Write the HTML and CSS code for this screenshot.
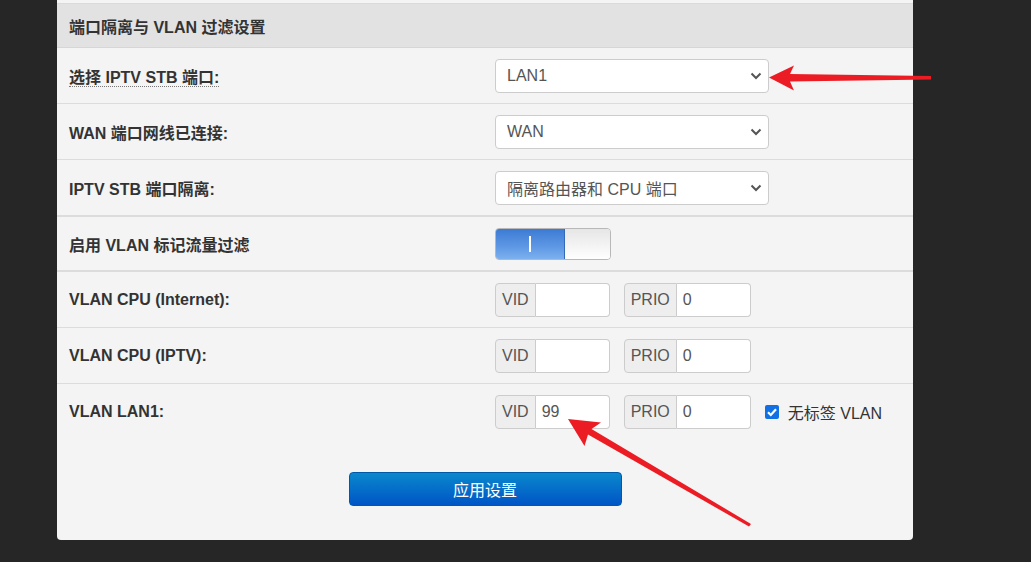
FILE: index.html
```html
<!DOCTYPE html>
<html lang="zh-CN">
<head>
<meta charset="utf-8">
<title>端口隔离与 VLAN 过滤设置</title>
<link rel="stylesheet" href="styles.css">
</head>
<body>
<div class="page">
  <div class="panel">
    <div class="top-strip"></div>
    <div class="panel-head">端口隔离与 VLAN 过滤设置</div>

    <div class="row">
      <div class="lbl"><span class="dotted">选择 IPTV STB 端口:</span></div>
      <div class="ctl">
        <div class="select"><span>LAN1</span><svg class="chev" width="12" height="8" viewBox="0 0 12 8"><path d="M1.5 1.5 L6 6 L10.5 1.5" fill="none" stroke="#555" stroke-width="2"/></svg></div>
      </div>
    </div>

    <div class="row">
      <div class="lbl">WAN 端口网线已连接:</div>
      <div class="ctl">
        <div class="select"><span>WAN</span><svg class="chev" width="12" height="8" viewBox="0 0 12 8"><path d="M1.5 1.5 L6 6 L10.5 1.5" fill="none" stroke="#555" stroke-width="2"/></svg></div>
      </div>
    </div>

    <div class="row row-thick">
      <div class="lbl">IPTV STB 端口隔离:</div>
      <div class="ctl">
        <div class="select"><span>隔离路由器和 CPU 端口</span><svg class="chev" width="12" height="8" viewBox="0 0 12 8"><path d="M1.5 1.5 L6 6 L10.5 1.5" fill="none" stroke="#555" stroke-width="2"/></svg></div>
      </div>
    </div>

    <div class="row row-toggle row-thick">
      <div class="lbl">启用 VLAN 标记流量过滤</div>
      <div class="ctl">
        <div class="toggle"><div class="toggle-on"><span class="bar"></span></div><div class="toggle-off"></div></div>
      </div>
    </div>

    <div class="row">
      <div class="lbl">VLAN CPU (Internet):</div>
      <div class="ctl">
        <div class="igroup"><span class="addon">VID</span><span class="field"></span></div>
        <div class="igroup"><span class="addon">PRIO</span><span class="field">0</span></div>
      </div>
    </div>

    <div class="row">
      <div class="lbl">VLAN CPU (IPTV):</div>
      <div class="ctl">
        <div class="igroup"><span class="addon">VID</span><span class="field"></span></div>
        <div class="igroup"><span class="addon">PRIO</span><span class="field">0</span></div>
      </div>
    </div>

    <div class="row row-last">
      <div class="lbl">VLAN LAN1:</div>
      <div class="ctl">
        <div class="igroup"><span class="addon">VID</span><span class="field">99</span></div>
        <div class="igroup"><span class="addon">PRIO</span><span class="field">0</span></div>
        <label class="check"><span class="box"><svg width="14" height="14" viewBox="0 0 14 14"><path d="M3 7.2 L5.8 10 L11 4.2" fill="none" stroke="#fff" stroke-width="2.2"/></svg></span>无标签 VLAN</label>
      </div>
    </div>

    <div class="actions">
      <button class="btn" type="button">应用设置</button>
    </div>
  </div>

  <svg class="annot" width="1031" height="562" viewBox="0 0 1031 562">
    <polygon points="769,77.5 794,65.5 790,74 931,76 931,79.5 790,81.5 794,90.5" fill="#ec1c24"/>
    <polygon points="568,419 601,422.5 591.5,429 751,524 749,526.5 588,434.5 584.5,446" fill="#ec1c24"/>
  </svg>
</div>
</body>
</html>
```

FILE: styles.css
```css
html, body {
  margin: 0;
  padding: 0;
}
body {
  background: #262626;
  font-family: "Liberation Sans", Arial, "Noto Sans CJK SC", sans-serif;
  color: #333;
}
.page {
  position: relative;
  width: 1031px;
  height: 562px;
  overflow: hidden;
}
.panel {
  margin-left: 57px;
  width: 856px;
  background: #f4f4f4;
  border-radius: 0 0 4px 4px;
}
.top-strip {
  height: 4px;
  background: #f4f4f4;
  border-bottom: 1px solid #dadada;
  box-sizing: border-box;
}
.panel-head {
  height: 44px;
  box-sizing: border-box;
  padding-left: 12px;
  display: flex;
  align-items: center;
  background: #e2e2e2;
  border-bottom: 1px solid #d6d6d6;
  font-size: 16px;
  font-weight: bold;
  color: #333;
}
.row {
  display: grid;
  grid-template-columns: 438px 1fr;
  align-items: center;
  height: 56px;
  box-sizing: border-box;
  border-bottom: 1px solid #dcdcdc;
}
.row-thick {
  height: 57px;
  border-bottom: 2px solid #dcdcdc;
}
.row-toggle {
  height: 55px;
}
.row-last {
  height: 55px;
  border-bottom: none;
}
.lbl {
  padding-left: 12px;
  font-size: 16px;
  font-weight: bold;
  color: #333;
}
.dotted {
  border-bottom: 1px dotted #777;
}
.ctl {
  display: flex;
  align-items: center;
}
.select {
  width: 274px;
  height: 34px;
  box-sizing: border-box;
  border: 1px solid #ccc;
  border-radius: 4px;
  background: #fff;
  display: flex;
  align-items: center;
  justify-content: space-between;
  padding: 0 6px 0 11px;
  font-size: 16px;
  color: #555;
}
.chev {
  display: block;
}
.toggle {
  display: flex;
  width: 116px;
  height: 32px;
  box-sizing: border-box;
  border: 1px solid #b8b8b8;
  border-radius: 4px;
  overflow: hidden;
}
.toggle-on {
  width: 68px;
  background: linear-gradient(to bottom, #3c7bd4, #5f98e4 60%, #7db0ef);
  border-right: 1px solid #3468b8;
  display: flex;
  align-items: center;
  justify-content: center;
}
.toggle-on .bar {
  width: 2px;
  height: 16px;
  background: #fff;
}
.toggle-off {
  flex: 1;
  background: linear-gradient(to bottom, #e6e6e6, #f2f2f2 50%, #ffffff);
}
.igroup {
  display: flex;
  height: 34px;
  margin-right: 14px;
  font-size: 16px;
  color: #555;
}
.addon {
  display: flex;
  align-items: center;
  padding: 0 6px;
  box-sizing: border-box;
  background: #eee;
  border: 1px solid #ccc;
  border-radius: 4px 0 0 4px;
}
.field {
  display: flex;
  align-items: center;
  width: 74px;
  box-sizing: border-box;
  padding-left: 6px;
  background: #fff;
  border: 1px solid #ccc;
  border-left: none;
  border-radius: 0 4px 4px 0;
}
.check {
  display: flex;
  align-items: center;
  font-size: 16px;
  color: #333;
}
.box {
  width: 14px;
  height: 14px;
  border-radius: 2px;
  background: #1170e4;
  margin-right: 9px;
  display: flex;
}
.actions {
  display: flex;
  justify-content: center;
  padding: 33px 0 34px;
}
.btn {
  width: 273px;
  height: 34px;
  border: 1px solid #0059a8;
  border-radius: 4px;
  background: linear-gradient(to bottom, #0a88cc, #0055c6);
  color: #fff;
  font-family: "Liberation Sans", Arial, "Noto Sans CJK SC", sans-serif;
  font-size: 16px;
  padding: 0;
}
.annot {
  position: absolute;
  left: 0;
  top: 0;
  pointer-events: none;
}
```
